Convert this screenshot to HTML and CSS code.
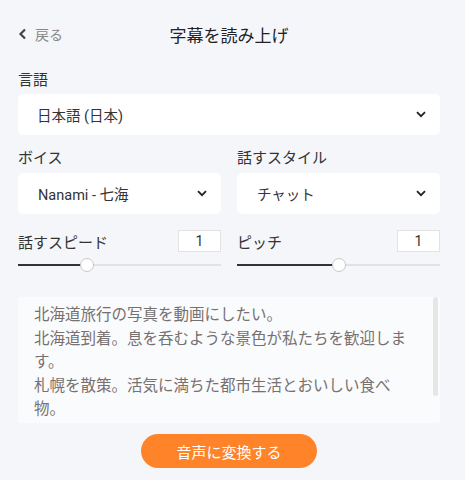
FILE: index.html
```
<!DOCTYPE html>
<html lang="ja">
<head>
  <meta charset="UTF-8">
  <title>字幕を読み上げ</title>
  <meta name="viewport" content="width=device-width, initial-scale=1.0">
  <link rel="stylesheet" href="styles.css">
</head>
<body>
  <div class="panel">
    <div class="header">
      <a class="back" href="#">
        <svg width="10" height="12" viewBox="0 0 10 12"><path d="M7 1.5 L2.5 6 L7 10.5" fill="none" stroke="#444" stroke-width="2.2"/></svg>
        <span>戻る</span>
      </a>
      <div class="title">字幕を読み上げ</div>
      <div></div>
    </div>

    <div class="label first">言語</div>
    <div class="select lang">
      <span>日本語 (日本)</span>
      <svg class="chev" width="10" height="7" viewBox="0 0 10 7"><path d="M1 1.2 L5 5.2 L9 1.2" fill="none" stroke="#222" stroke-width="1.8"/></svg>
    </div>

    <div class="cols">
      <div class="col">
        <div class="label">ボイス</div>
        <div class="select">
          <span>Nanami - 七海</span>
          <svg class="chev" width="10" height="7" viewBox="0 0 10 7"><path d="M1 1.2 L5 5.2 L9 1.2" fill="none" stroke="#222" stroke-width="1.8"/></svg>
        </div>
        <div class="num-row">
          <span>話すスピード</span>
          <div class="num">1</div>
        </div>
        <div class="slider"><div class="fill" style="width:68px"></div><div class="thumb" style="left:62px"></div></div>
      </div>
      <div class="col">
        <div class="label">話すスタイル</div>
        <div class="select">
          <span>チャット</span>
          <svg class="chev" width="10" height="7" viewBox="0 0 10 7"><path d="M1 1.2 L5 5.2 L9 1.2" fill="none" stroke="#222" stroke-width="1.8"/></svg>
        </div>
        <div class="num-row">
          <span>ピッチ</span>
          <div class="num">1</div>
        </div>
        <div class="slider"><div class="fill" style="width:101px"></div><div class="thumb" style="left:95px"></div></div>
      </div>
    </div>

    <div class="script-box">
      <div class="script">
        <p>北海道旅行の写真を動画にしたい。</p>
        <p>北海道到着。息を呑むような景色が私たちを歓迎します。</p>
        <p>札幌を散策。活気に満ちた都市生活とおいしい食べ物。</p>
      </div>
      <div class="scroll-thumb"></div>
    </div>

    <div class="actions">
      <button class="convert">音声に変換する</button>
    </div>
  </div>
</body>
</html>
```

FILE: styles.css
```
body {
  margin:0; background:#f5f6fa;
  font-family: Roboto, 'Noto Sans CJK JP', sans-serif;
  color:#333;
}
.panel { padding:21px 25px 0 18px; }
.header {
  display:grid; grid-template-columns:1fr auto 1fr;
  align-items:center; height:26px;
}
.back {
  display:flex; align-items:center; gap:7px;
  color:#888; text-decoration:none; font-size:14px;
}
.title { font-size:17px; color:#222; }
.label { font-size:15px; line-height:20px; margin-top:13px; }
.label.first { margin-top:23px; }
.select {
  margin-top:6px; height:41px; background:#fff; border-radius:5px;
  display:flex; align-items:center; justify-content:space-between;
  padding:0 14px 0 19px; font-size:14.5px; color:#333;
}
.select.lang { margin-top:4px; }
.cols .select { margin-top:5px; padding-left:20px; }
.cols { display:flex; gap:16px; }
.col { flex:1; }
.num-row {
  margin-top:16px; height:22px;
  display:flex; align-items:center; justify-content:space-between;
  font-size:15px;
}
.num {
  width:41px; height:20px; border:1px solid #e3e3e3; background:#fff;
  text-align:center; line-height:20px; font-size:14px;
}
.slider {
  position:relative; margin-top:6px; height:14px;
}
.slider::before {
  content:""; position:absolute; left:0; right:0; top:6px; height:2px; background:#e2e2e2;
}
.fill { position:absolute; left:0; top:6px; height:2px; background:#333; }
.thumb {
  position:absolute; top:0; width:12px; height:12px; border-radius:50%;
  background:#fff; border:1px solid #c8c8c8;
}
.script-box {
  position:relative; margin-top:25px; height:126px; overflow:hidden;
  background:#fafbfd; border-radius:3px;
}
.script {
  padding:7px 26px 0 16px;
  font-size:15.5px; line-height:23.5px; color:#777070;
}
.script p { margin:0; }
.scroll-thumb {
  position:absolute; top:0; right:2px; width:5px; height:99px;
  border-radius:3px; background:#e6e6e6;
}
.actions { display:flex; justify-content:center; margin-top:11px; }
.convert {
  width:176px; height:34px; border:none; border-radius:17px;
  background:#ff8329; color:#fff; font-size:15px;
  font-family: Roboto, 'Noto Sans CJK JP', sans-serif;
}
```
